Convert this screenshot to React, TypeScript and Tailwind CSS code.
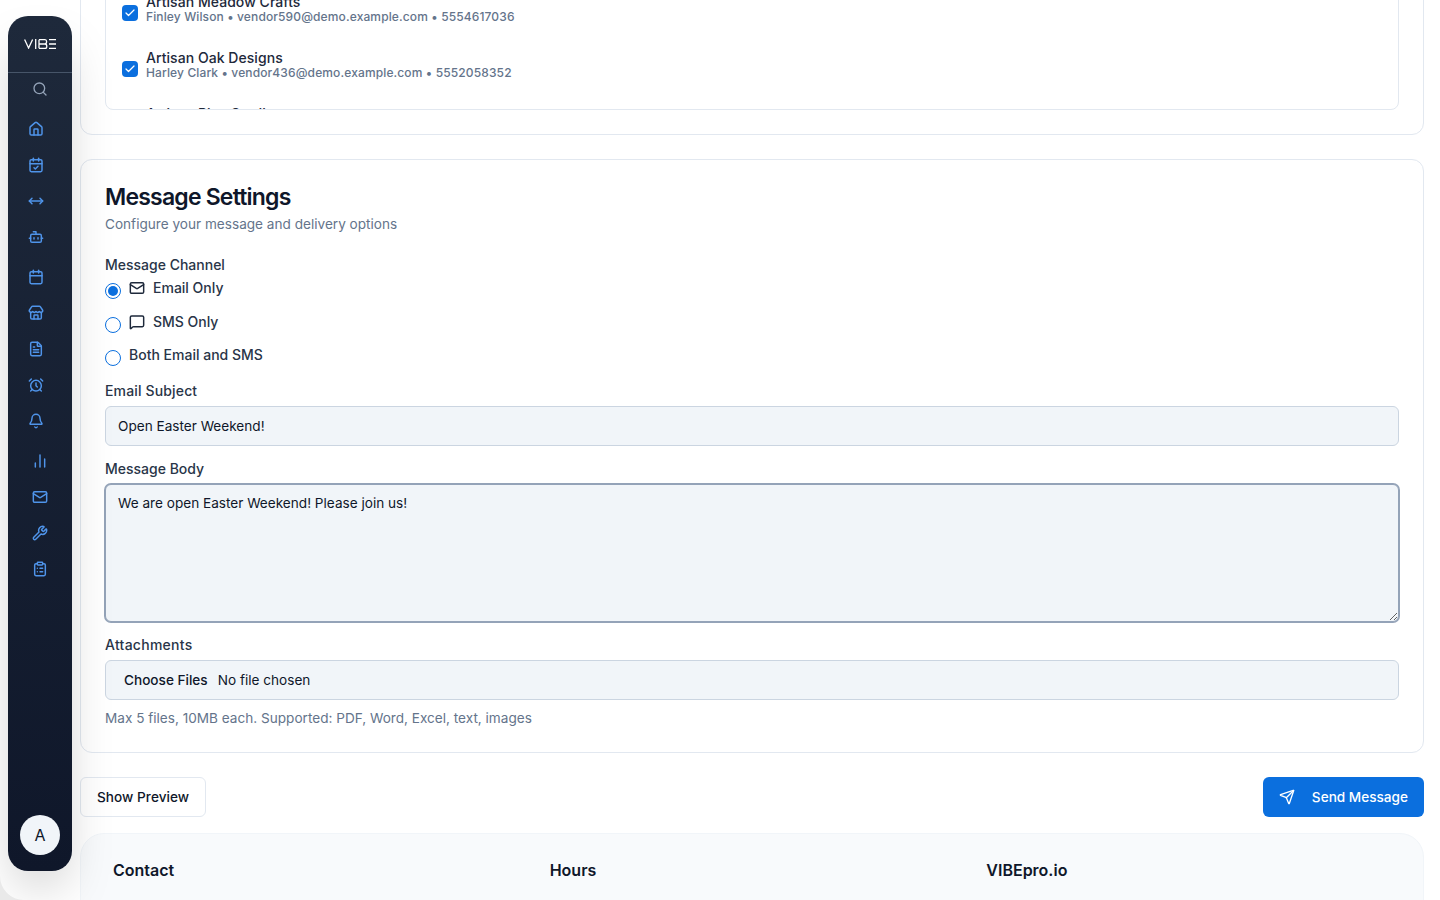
import { AlarmClock, Bell, Bot, Calendar, CalendarCheck, ChartNoAxesColumn, Check, ClipboardList, FileText, House, Mail, MessageSquare, MoveHorizontal, Search, Send, Store, Wrench } from "lucide-react";

const groupA = [House, CalendarCheck, MoveHorizontal, Bot];
const groupB = [Calendar, Store, FileText, AlarmClock, Bell];
const groupC = [ChartNoAxesColumn, Mail, Wrench, ClipboardList];

function Logo() {
  return (
    <svg width="32" height="10" viewBox="0 0 32 10" fill="none" stroke="white" strokeWidth="1.3">
      <path d="M0.6 0.5 L4.6 9 L8.6 0.5" />
      <path d="M11.7 0 V10" />
      <path d="M15 0.7 H21 Q22.6 0.7 22.6 2.6 Q22.6 5 21 5 H15 M21 5 Q22.8 5 22.8 7.4 Q22.8 9.3 21 9.3 H15 M15 0.7 V9.3" />
      <path d="M25 0.7 H32 M25 5 H32 M25 9.3 H32" />
    </svg>
  );
}

function Sidebar() {
  return (
    <aside className="relative z-10 ml-2 mt-4 flex h-[855px] w-16 shrink-0 flex-col rounded-[20px] bg-gradient-to-b from-[#1e293b] to-[#0f172a] shadow-2xl">
      <div className="flex h-[57px] shrink-0 items-center justify-center border-b border-[#475569]">
        <Logo />
      </div>
      <div className="flex h-8 shrink-0 items-center justify-center text-[#94a3b8]">
        <Search size={16} />
      </div>
      <nav className="mt-[6px] flex flex-col gap-1 text-[#4f94ea]">
        <div className="flex flex-col pl-5">
          {groupA.map((I, i) => (
            <div key={i} className="flex h-9 items-center"><I size={16} strokeWidth={2.2} /></div>
          ))}
        </div>
        <div className="flex flex-col pl-5">
          {groupB.map((I, i) => (
            <div key={i} className="flex h-9 items-center"><I size={16} strokeWidth={2.2} /></div>
          ))}
        </div>
        <div className="flex flex-col items-center">
          {groupC.map((I, i) => (
            <div key={i} className="flex h-9 items-center"><I size={16} strokeWidth={2.2} /></div>
          ))}
        </div>
      </nav>
      <div className="mt-auto flex justify-center pb-4">
        <div className="flex h-10 w-10 items-center justify-center rounded-full bg-[#f1f5f9] text-base text-[#0f172a]">A</div>
      </div>
    </aside>
  );
}

function VendorRow({ name, sub, className = "" }: { name: string; sub: string; className?: string }) {
  return (
    <div className={`flex h-14 shrink-0 items-center gap-2 px-4 ${className}`}>
      <span className="flex h-4 w-4 shrink-0 items-center justify-center rounded-[4px] bg-[#0b6fde] text-white">
        <Check size={12} strokeWidth={2.5} />
      </span>
      <div className="-mt-[6px] flex flex-col">
        <span className="text-sm leading-[14px] font-medium tracking-[0.05px] text-[#1e293b]">{name}</span>
        <span className="text-xs leading-4 font-medium tracking-[0.125px] text-[#64748b]">{sub}</span>
      </div>
    </div>
  );
}

function Radio({ checked }: { checked?: boolean }) {
  return (
    <span className="mt-[5px] flex h-4 w-4 shrink-0 items-center justify-center rounded-full border border-[#0b6fde] bg-white">
      {checked && <span className="h-[10px] w-[10px] rounded-full bg-[#0b6fde]" />}
    </span>
  );
}

function RadioRow({ checked, icon, label }: { checked?: boolean; icon?: React.ReactNode; label: string }) {
  return (
    <div className="flex h-[25.5px] items-start gap-2">
      <Radio checked={checked} />
      <div className="flex items-center gap-2 text-sm leading-5 font-medium text-[#293548]">
        {icon}
        <span>{label}</span>
      </div>
    </div>
  );
}

function FieldLabel({ children, className }: { children: React.ReactNode; className: string }) {
  return <div className={`text-sm leading-[14px] font-medium text-[#293548] ${className}`}>{children}</div>;
}

export default function App() {
  return (
    <div className="h-screen w-full overflow-hidden bg-[#e9e9e9] font-['Inter',sans-serif]">
      <div className="flex h-full overflow-hidden rounded-bl-[24px] bg-white">
        <Sidebar />
        <main className="ml-2 flex min-w-0 flex-1 flex-col pr-4">
          <section className="-mt-[41px] flex h-[176px] shrink-0 flex-col rounded-xl border border-[#e2e8f0] bg-white p-6">
            <div className="flex min-h-0 flex-1 flex-col overflow-hidden rounded-lg border border-[#e2e8f0]">
              <VendorRow name="Artisan Meadow Crafts" sub="Finley Wilson • vendor590@demo.example.com • 5554617036" />
              <VendorRow name="Artisan Oak Designs" sub="Harley Clark • vendor436@demo.example.com • 5552058352" />
              <VendorRow name="Artisan Pine Studio" sub="Jordan Lee • vendor212@demo.example.com • 5553120947" />
            </div>
          </section>

          <section className="mt-6 shrink-0 rounded-xl border border-[#e2e8f0] bg-white p-6">
            <h2 className="text-[23px] leading-[26px] font-semibold tracking-[-0.8px] text-[#0f172a]">Message Settings</h2>
            <p className="mt-1 text-[13.6px] leading-5 text-[#64748b]">Configure your message and delivery options</p>

            <FieldLabel className="mt-6">Message Channel</FieldLabel>
            <div className="mt-[6px] flex flex-col gap-2">
              <RadioRow checked icon={<Mail size={16} className="text-[#1e293b]" strokeWidth={2.2} />} label="Email Only" />
              <RadioRow icon={<MessageSquare size={16} className="text-[#1e293b]" strokeWidth={2.2} />} label="SMS Only" />
              <RadioRow label="Both Email and SMS" />
            </div>

            <FieldLabel className="mt-[13.5px] tracking-[0.15px]">Email Subject</FieldLabel>
            <input
              readOnly
              value="Open Easter Weekend!"
              className="mt-2 block h-10 w-full rounded-md border border-[#cbd5e1] bg-[#f1f5f9] px-3 text-[13.6px] text-[#0f172a] outline-none"
            />

            <FieldLabel className="mt-4">Message Body</FieldLabel>
            <textarea
              readOnly
              value="We are open Easter Weekend! Please join us!"
              className="mt-2 block h-[138px] w-full rounded-md border border-[#94a3b8] bg-[#f1f5f9] px-3 py-2 text-[13.6px] leading-5 text-[#0f172a] ring-1 ring-[#94a3b8] outline-none"
            />

            <FieldLabel className="mt-4 tracking-[0.27px]">Attachments</FieldLabel>
            <input
              type="file"
              multiple
              className="mt-2 block h-10 w-full rounded-md border border-[#cbd5e1] bg-[#f1f5f9] px-3 py-[9px] text-[13.6px] leading-5 text-[#0f172a] file:mr-[4px] file:border-0 file:bg-transparent file:px-[6px] file:text-[13.6px] file:font-medium file:text-[#0f172a]"
            />
            <p className="mt-2 text-[13.6px] leading-5 text-[#64748b]">Max 5 files, 10MB each. Supported: PDF, Word, Excel, text, images</p>
          </section>

          <div className="mt-6 flex shrink-0 items-center justify-between">
            <button className="h-10 rounded-md border border-[#e2e8f0] bg-white px-4 text-[13.6px] font-medium tracking-[0.05px] text-[#0f172a]">Show Preview</button>
            <button className="flex h-10 items-center gap-[17px] rounded-md bg-[#0b6fde] px-4 text-[13.6px] font-medium text-white">
              <Send size={16} />
              Send Message
            </button>
          </div>

          <footer className="mt-4 grid h-[200px] shrink-0 grid-cols-3 gap-8 rounded-3xl border border-[#f1f5f9] bg-[#f8fafc] px-8 py-6">
            <h3 className="text-base leading-6 font-semibold text-[#0f172a]">Contact</h3>
            <h3 className="text-base leading-6 font-semibold text-[#0f172a]">Hours</h3>
            <h3 className="text-base leading-6 font-semibold text-[#0f172a]">VIBEpro.io</h3>
          </footer>
        </main>
      </div>
    </div>
  );
}
